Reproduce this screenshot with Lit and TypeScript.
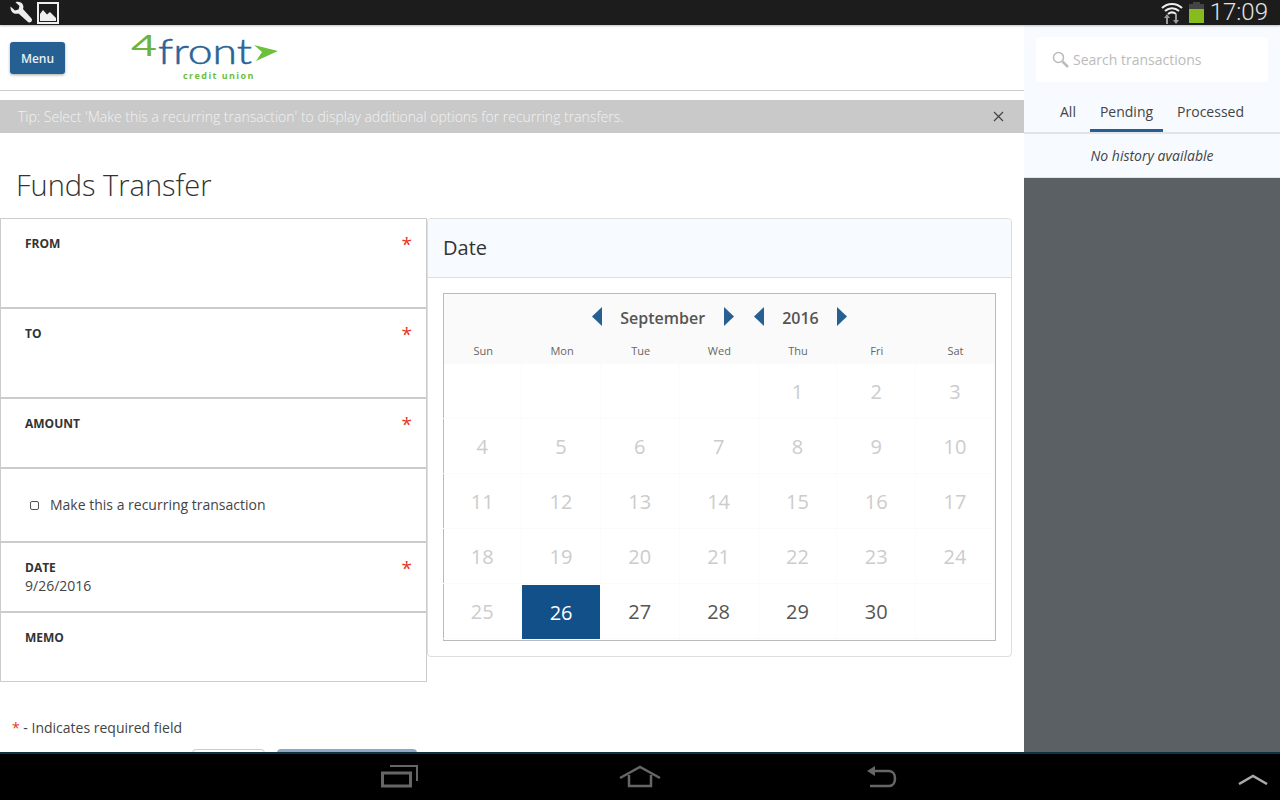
import { LitElement, html, css, svg } from "lit";
import { customElement } from "lit/decorators.js";

const prevDays = ["", "", "", "", 1, 2, 3, 4, 5, 6, 7, 8, 9, 10, 11, 12, 13, 14, 15, 16, 17, 18, 19, 20, 21, 22, 23, 24, 25];
const activeDays = [26, 27, 28, 29, 30, ""];

@customElement("app-root")
export class AppRoot extends LitElement {
  static styles = css`
    :host { display: block; width: 1280px; height: 800px; overflow: hidden; font-family: "Open Sans", sans-serif; color: #333; background: #fff; }
    .screen { display: flex; flex-direction: column; height: 800px; }
    .status { height: 25px; flex: none; background: #1c1c1c; display: flex; align-items: center; justify-content: space-between; padding: 0 12px 0 8px; box-sizing: border-box; position: relative; z-index: 2; box-shadow: 0 1px 2px rgba(0,0,0,.25); }
    .status-left, .status-right { display: flex; align-items: center; }
    .status-left { gap: 4px; }
    .clock { font-family: "Roboto", sans-serif; font-size: 24px; font-weight: 300; color: #e4e4e4; line-height: 25px; margin-left: 6px; }
    .body { flex: 1; min-height: 0; display: flex; overflow: hidden; }
    .main { width: 1024px; flex: none; background: #fff; overflow: hidden; }
    .header { height: 66px; box-sizing: border-box; border-bottom: 1px solid #ccc; display: flex; padding: 17px 0 0 10px; }
    .menu { width: 55px; height: 32px; box-sizing: border-box; background: #265f92; color: #e9eff5; border-radius: 3px; font-size: 12px; font-weight: 600; display: flex; align-items: center; justify-content: center; box-shadow: 0 1px 3px rgba(0,0,0,.35); }
    .logo { margin: -8px 0 0 66px; display: block; overflow: visible; }
    .logo-four { font: 400 29px "Lato", sans-serif; fill: #6cb33f; }
    .logo-front { font: 300 35px "Lato", sans-serif; fill: #2a6496; stroke: #2a6496; stroke-width: .5px; }
    .logo-sub { font: 700 9px "Open Sans", sans-serif; fill: #6cc03c; letter-spacing: 1.6px; }
    .tip { margin-top: 9px; height: 33px; background: #c9c9c9; color: #f2f2f2; font-size: 14px; font-weight: 300; display: flex; align-items: center; justify-content: space-between; padding: 0 20px 0 18px; }
    .close { width: 11px; height: 11px; display: block; }
    h1 { margin: 0; padding: 32px 0 0 16px; height: 85px; box-sizing: border-box; font-size: 29px; line-height: 40px; font-weight: 300; color: #333; }
    .columns { display: flex; align-items: flex-start; }
    .form { width: 427px; flex: none; }
    .row { box-sizing: border-box; border: 1px solid #ccc; position: relative; padding: 16px 24px 0; }
    .h90 { height: 90px; } .h70 { height: 70px; } .h74 { height: 74px; }
    .label { font-size: 12px; font-weight: 700; line-height: 18px; color: #333; }
    .value { font-size: 14px; line-height: 18px; color: #444; }
    .star { position: absolute; right: 14px; top: 11px; color: #e8351e; font-size: 19px; line-height: 28px; font-family: "Open Sans", sans-serif; }
    .check { display: flex; align-items: center; height: 100%; padding-left: 29px; gap: 11px; font-size: 14px; line-height: 20px; color: #444; }
    .box { width: 7px; height: 7px; border: 1px solid #555; border-radius: 2px; }
    .panel { width: 585px; height: 439px; box-sizing: border-box; border: 1px solid #ddd; border-radius: 4px; }
    .panel-head { height: 59px; box-sizing: border-box; background: #f7faff; border-bottom: 1px solid #ddd; padding: 0 15px; font-size: 20px; line-height: 58px; color: #333; border-radius: 4px 4px 0 0; }
    .calendar { margin: 15px 15px 0; width: 553px; height: 348px; box-sizing: border-box; border: 1px solid #bbb; display: flex; flex-direction: column; }
    .cal-head { height: 70px; flex: none; background: #fafafa; }
    .cal-nav { height: 47px; display: flex; align-items: center; justify-content: center; font-size: 16px; font-weight: 600; color: #555; box-sizing: border-box; }
    .tri { width: 10px; height: 19px; display: block; margin-top: -3px; flex: none; }
    .month { margin: 0 19px 0 18px; }
    .year { margin: 0 18px; }
    .gap { width: 20px; }
    .dow { display: grid; grid-template-columns: repeat(7, 78.7px); font-size: 11px; line-height: 14px; color: #666; text-align: center; padding-top: 3px; }
    .days { display: grid; grid-template-columns: repeat(7, 78.8px); grid-auto-rows: 55px; margin-left: -.7px; }
    .day { display: flex; align-items: center; justify-content: center; font-size: 20px; color: #ccc; border-right: 1px solid #fbfbfb; border-bottom: 1px solid #fbfbfb; box-sizing: border-box; }
    .day.on { color: #555; }
    .day.sel { background: #12508a; background-clip: padding-box; color: #fff; border: none; border-top: 1px solid transparent; width: 78px; }
    .req { margin: 36px 0 0 12px; font-size: 14px; line-height: 20px; color: #444; }
    .req span { color: #e8351e; }
    .actions { display: flex; margin: 11px 0 0 192px; gap: 12px; }
    .btn { height: 40px; border-radius: 4px; box-sizing: border-box; }
    .cancel { width: 73px; border: 1px solid #ccc; background: #fff; }
    .submit { width: 140px; background: #8ea9c6; }
    .side { flex: 1; background: #5b6064; }
    .side-top { height: 153px; box-sizing: border-box; background: #f7faff; border-bottom: 1px solid #e4e4e4; padding-top: 12px; }
    .search { margin: 0 12px; height: 45px; background: #fff; border-radius: 4px; display: flex; align-items: center; padding-left: 16px; gap: 4px; font-size: 14px; color: #bbb; }
    .tabs { display: flex; justify-content: center; height: 40px; margin-top: 10px; border-bottom: 2px solid #e2e4e8; }
    .tab { font-size: 14px; color: #444; line-height: 40px; padding: 0 10px; height: 40px; box-sizing: border-box; text-align: center; }
    .tab.active { border-bottom: 3px solid #265f92; }
    .tab-all, .tab-proc { padding: 0 14px; }
    .empty { text-align: center; font-size: 14px; font-style: italic; color: #444; line-height: 20px; padding-top: 12px; }
    .nav { height: 48px; flex: none; background: #000; border-top: 2px solid #0c3145; box-sizing: border-box; display: flex; align-items: center; position: relative; z-index: 2; }
    .nav svg { display: block; }
    .nav-icons { display: flex; align-items: center; margin-left: 381px; padding-bottom: 3px; }
    .nav-home { margin-left: 201px; }
    .nav-back { margin-left: 205px; }
    .nav-up { margin-left: auto; margin-right: 12px; margin-top: 3px; }
  `;

  render() {
    return html`
      <div class="screen">
        <div class="status">
          <div class="status-left">
            <svg width="25" height="24" viewBox="0 0 24 24"><path d="M2 5.500 6.500 9.500l3.500-1 1-3.500L7 1.200C10 .2 13.500 1.500 14.500 4c.6 1.500.4 3 0 4l8.500 9.500c.8 1 .6 2.400-.3 3.300-1 1-2.300 1-3.200.2L10 12.500c-1.200.5-3 .5-4.500-.1C3 11.300 1.600 8 2 5.500Z" fill="#eee"/></svg>
            <svg width="22" height="22" viewBox="0 0 22 22"><rect x="1" y="1" width="20" height="20" fill="none" stroke="#eee" stroke-width="2"/><path d="M3 19V12L6 8l4 4.500L13 10l6 6v3Z" fill="#eee"/></svg>
          </div>
          <div class="status-right">
            <svg width="22" height="24" viewBox="0 0 22 24"><path d="M1 7C6.500 1.500 15.500 1.500 21 7M4 10C8 6.300 14 6.300 18 10M7 13C9.500 11 12.500 11 15 13" fill="none" stroke="#eee" stroke-width="2"/><path d="M5 23v-6H3l3-4 3 4H7v6ZM14 13v6h-2l3 4 3-4h-2v-6Z" fill="#999"/></svg>
            <svg width="15" height="21" viewBox="0 0 15 21" style="margin-left:6px"><path d="M4 0h7v3H4Z" fill="#444"/><rect y="2" width="15" height="5" fill="#444"/><rect y="7" width="15" height="14" fill="#86bc1c"/></svg>
            <span class="clock">17:09</span>
          </div>
        </div>
        <div class="body">
          <div class="main">
            <div class="header">
              <div class="menu">Menu</div>
              <svg class="logo" width="150" height="60" viewBox="0 0 150 60">
                ${svg`<text class="logo-four" x="0" y="22" textLength="26" lengthAdjust="spacingAndGlyphs">4</text>
                <text class="logo-front" x="27" y="30" textLength="94" lengthAdjust="spacingAndGlyphs">front</text>
                <path d="M123 11 147 17 125 27 131 18Z" fill="#6cc03c"/>
                <text class="logo-sub" x="52" y="45" textLength="72">credit union</text>`}
              </svg>
            </div>
            <div class="tip">
              <span>Tip: Select 'Make this a recurring transaction' to display additional options for recurring transfers.</span>
              <svg class="close" viewBox="0 0 11 11"><path d="M1 1l9 9M10 1l-9 9" stroke="#444" stroke-width="1.200"/></svg>
            </div>
            <h1>Funds Transfer</h1>
            <div class="columns">
              <div class="form">
                <div class="row h90"><div class="label">FROM</div><span class="star">*</span></div>
                <div class="row h90"><div class="label">TO</div><span class="star">*</span></div>
                <div class="row h70"><div class="label">AMOUNT</div><span class="star">*</span></div>
                <div class="row h74" style="padding:0"><div class="check"><span class="box"></span>Make this a recurring transaction</div></div>
                <div class="row h70"><div class="label">DATE</div><div class="value">9/26/2016</div><span class="star">*</span></div>
                <div class="row h70"><div class="label">MEMO</div></div>
              </div>
              <div class="panel">
                <div class="panel-head">Date</div>
                <div class="calendar">
                  <div class="cal-head">
                    <div class="cal-nav">
                      <svg class="tri" viewBox="0 0 10 19"><path d="M10 0v19L0 9.500Z" fill="#265f92"/></svg>
                      <span class="month">September</span>
                      <svg class="tri" viewBox="0 0 10 19"><path d="M0 0v19L10 9.500Z" fill="#265f92"/></svg>
                      <span class="gap"></span>
                      <svg class="tri" viewBox="0 0 10 19"><path d="M10 0v19L0 9.500Z" fill="#265f92"/></svg>
                      <span class="year">2016</span>
                      <svg class="tri" viewBox="0 0 10 19"><path d="M0 0v19L10 9.500Z" fill="#265f92"/></svg>
                    </div>
                    <div class="dow">
                      ${["Sun", "Mon", "Tue", "Wed", "Thu", "Fri", "Sat"].map((d) => html`<span>${d}</span>`)}
                    </div>
                  </div>
                  <div class="days">
                    ${prevDays.map((d) => html`<div class="day">${d}</div>`)}
                    ${activeDays.map((d) => html`<div class="day on ${d === 26 ? "sel" : ""}">${d}</div>`)}
                  </div>
                </div>
              </div>
            </div>
            <div class="req"><span>*</span> - Indicates required field</div>
            <div class="actions"><div class="btn cancel"></div><div class="btn submit"></div></div>
          </div>
          <div class="side">
            <div class="side-top">
              <div class="search">
                <svg width="17" height="17" viewBox="0 0 17 17"><circle cx="6.500" cy="6.500" r="5" fill="none" stroke="#bbb" stroke-width="1.500"/><path d="M10.500 10.500 16 16" stroke="#bbb" stroke-width="2.500"/></svg>
                <span>Search transactions</span>
              </div>
              <div class="tabs">
                <div class="tab tab-all">All</div>
                <div class="tab active">Pending</div>
                <div class="tab tab-proc">Processed</div>
              </div>
              <div class="empty">No history available</div>
            </div>
          </div>
        </div>
        <div class="nav">
          <div class="nav-icons">
            <svg width="37" height="24" viewBox="0 0 37 24"><path d="M1.500 9h28v13h-28Z" fill="none" stroke="#666" stroke-width="3"/><path d="M9 2h27v15" fill="none" stroke="#666" stroke-width="2"/></svg>
            <svg class="nav-home" width="42" height="24" viewBox="0 0 42 24"><path d="M1 14 21 3l20 11M10 11v11h22V11" fill="none" stroke="#666" stroke-width="2.500"/></svg>
            <svg class="nav-back" width="32" height="24" viewBox="0 0 32 24"><path d="M1 7 9 2v10Z" fill="#666"/><path d="M8 7h15c8 0 8 15 0 15H4" fill="none" stroke="#666" stroke-width="2.500"/></svg>
          </div>
          <svg class="nav-up" width="30" height="12" viewBox="0 0 30 12"><path d="M1 11 15 3l14 8" fill="none" stroke="#aaa" stroke-width="2.500"/></svg>
        </div>
      </div>
    `;
  }
}
